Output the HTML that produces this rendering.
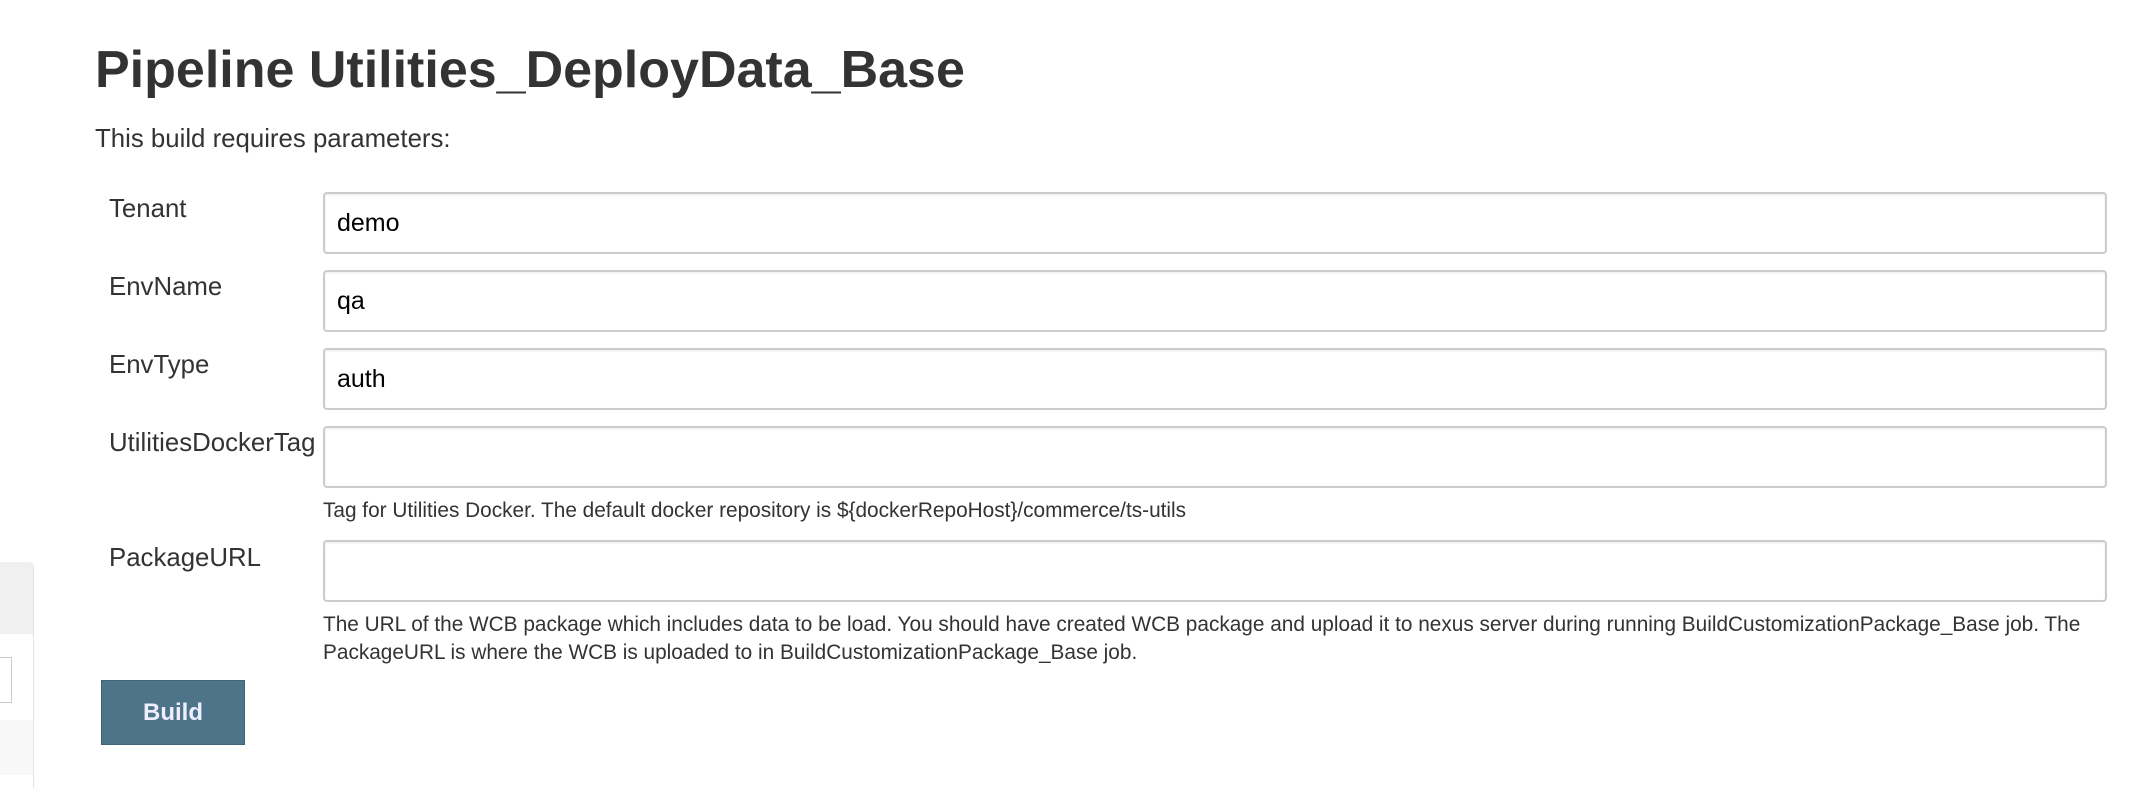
<!DOCTYPE html>
<html><head><meta charset="utf-8"><style>
html,body{margin:0;padding:0;width:2138px;height:788px;overflow:hidden;background:#fff;font-family:"Liberation Sans",Arial,sans-serif;color:#333;position:relative}
.a{position:absolute}
h1{position:absolute;left:95px;top:38px;margin:0;font-size:52px;font-weight:bold;line-height:64px;white-space:nowrap}
.sub{left:95px;top:125px;font-size:25.8px;line-height:28px;white-space:nowrap}
.lbl{left:109px;font-size:25.8px;line-height:28px;white-space:nowrap}
.inp{left:323px;width:1768px;height:58px;border:2px solid #ccc;border-radius:4px;box-shadow:inset 0 1px 2px rgba(0,0,0,.08);box-sizing:content-box;font-size:25px;line-height:58px;padding-left:12px;color:#000}
.desc{left:323px;font-size:20.8px;line-height:28px;width:1800px}
.btn{left:101px;top:680px;width:144px;height:65px;background:#4d7489;border:1px solid #3f6478;box-sizing:border-box;color:#eef;font-weight:bold;font-size:24px;line-height:63px;text-align:center}
</style></head><body>
<h1>Pipeline Utilities_DeployData_Base</h1>
<div class="a sub">This build requires parameters:</div>

<div class="a lbl" style="top:195px">Tenant</div>
<div class="a inp" style="top:192px">demo</div>
<div class="a lbl" style="top:273px">EnvName</div>
<div class="a inp" style="top:270px">qa</div>
<div class="a lbl" style="top:351px">EnvType</div>
<div class="a inp" style="top:348px">auth</div>
<div class="a lbl" style="top:429px">UtilitiesDockerTag</div>
<div class="a inp" style="top:426px"></div>
<div class="a desc" style="top:497px">Tag for Utilities Docker. The default docker repository is ${dockerRepoHost}/commerce/ts-utils</div>
<div class="a lbl" style="top:544px">PackageURL</div>
<div class="a inp" style="top:540px"></div>
<div class="a desc" style="top:611px">The URL of the WCB package which includes data to be load. You should have created WCB package and upload it to nexus server during running BuildCustomizationPackage_Base job. The PackageURL is where the WCB is uploaded to in BuildCustomizationPackage_Base job.</div>
<div class="a btn">Build</div>

<div class="a" style="left:0;top:562px;width:33px;height:226px;border-right:1px solid #e4e4e4;border-top-right-radius:6px;overflow:hidden">
 <div class="a" style="left:0;top:0;width:33px;height:72px;background:#f0f0f0"></div>
 <div class="a" style="left:-2px;top:95px;width:12px;height:44px;border:1px solid #ccc;background:#fff"></div>
 <div class="a" style="left:0;top:158px;width:33px;height:55px;background:#f8f8f8"></div>
</div>
</body></html>
